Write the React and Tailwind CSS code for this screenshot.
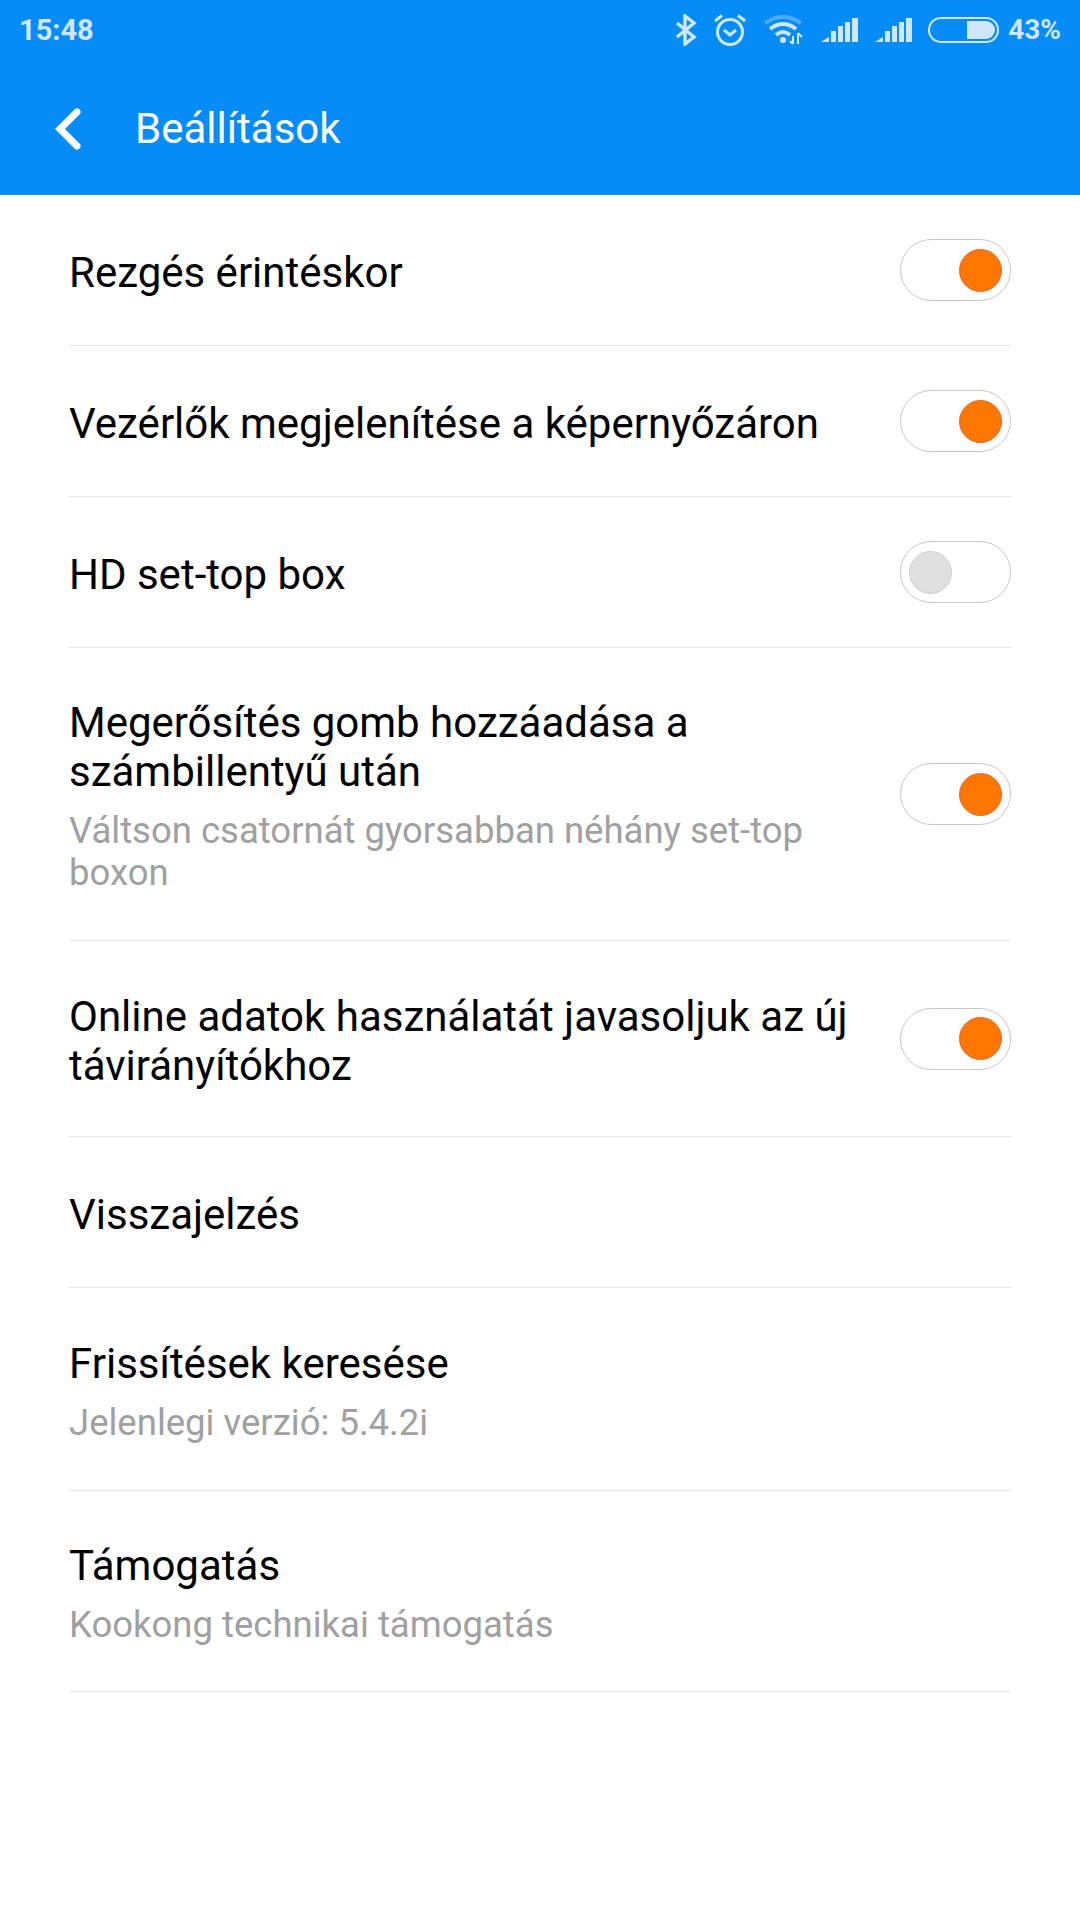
const FONT = "font-['Roboto',sans-serif]";

function Toggle({ on }) {
  return (
    <div className={`w-[111px] h-[62px] shrink-0 rounded-full border-[1.5px] border-[#c8c8c8] bg-white flex items-center ${on ? "justify-end pr-[8px]" : "justify-start pl-[8px]"}`}>
      <div className={`w-[43px] h-[43px] rounded-full border ${on ? "bg-[#ff7600] border-[#e8662a]" : "bg-[#e0e0e0] border-[#cfcfcf]"}`} />
    </div>
  );
}

function Row({ title, sub, toggle, h }) {
  return (
    <div className="border-b border-[#e6e6e6] flex items-center justify-between" style={{ height: h }}>
      <div className="flex-1 min-w-0 pr-[30px] pt-[4px]">
        <div className="text-[42px] leading-[49px] text-black">{title}</div>
        {sub && <div className="text-[36.5px] leading-[42px] text-[#a0a0a0] mt-[14px]">{sub}</div>}
      </div>
      {toggle !== undefined && <Toggle on={toggle} />}
    </div>
  );
}

function StatusIcons() {
  const c = "#cfe6fd";
  const Bars = () => (
    <svg width="38" height="26" viewBox="0 0 38 26">
      <path fill={c} d="M0 25 L8 20 V25 Z" />
      <rect x="10" y="14" width="5" height="11" fill={c} />
      <rect x="17" y="9" width="5" height="16" fill={c} />
      <rect x="24" y="5" width="5" height="20" fill={c} />
      <rect x="31" y="1" width="6" height="24" fill={c} />
    </svg>
  );
  return (
    <div className="flex items-center text-[#cfe6fd]">
      <svg width="22" height="32" viewBox="0 0 22 32" fill="none" stroke={c} strokeWidth="3.4" className="mr-[16px]">
        <path d="M2 9 L19 23 L10 30 V2 L19 9 L2 23" />
      </svg>
      <svg width="34" height="34" viewBox="0 0 34 34" fill="none" stroke={c} strokeWidth="3" className="mr-[17px]">
        <circle cx="17" cy="19" r="12.5" />
        <path d="M11 17 L17 22 L23 17" />
        <path d="M2 8 L9 2.5 M32 8 L25 2.5" />
      </svg>
      <svg width="40" height="30" viewBox="0 0 40 30" fill="none" className="mr-[17px]">
        <path d="M1 8 Q19 -4 37 8" stroke={c} strokeOpacity="0.35" strokeWidth="4" />
        <path d="M6 14 Q19 4 32 14" stroke={c} strokeWidth="4" />
        <path d="M12 20 Q19 14 26 20" stroke={c} strokeWidth="4" />
        <circle cx="19" cy="25" r="3" fill={c} />
        <path d="M29 21 V29 M34 18 V29 M26 26 L29 29 M38 22 L34 18" stroke={c} strokeWidth="2" />
      </svg>
      <div className="mr-[16px] flex"><Bars /></div>
      <div className="mr-[15px] flex"><Bars /></div>
      <div className="relative w-[71px] h-[26px] rounded-full border-2 border-[#cfe6fd] mr-[9px] overflow-hidden">
        <div className="absolute right-[2px] top-[2px] bottom-[2px] w-[28px] bg-[#cfe6fd] rounded-r-full" />
      </div>
      <span className="text-[28px] font-bold leading-none">43%</span>
    </div>
  );
}

export default function App() {
  return (
    <div className={`w-[1080px] h-[1920px] bg-white ${FONT}`}>
      <div className="h-[195px] bg-[#058cf7]">
        <div className="h-[60px] pl-[19px] pr-[19px] flex items-center justify-between">
          <span className="text-[29px] font-bold text-[#cfe6fd] leading-none">15:48</span>
          <StatusIcons />
        </div>
        <div className="flex items-center h-[70px] mt-[34px] pl-[55px]">
          <svg width="26" height="42" viewBox="0 0 26 42" fill="none" stroke="white" strokeWidth="7" strokeLinecap="round" strokeLinejoin="miter">
            <path d="M22 4 L5 21 L22 38" />
          </svg>
          <span className="text-[42px] leading-none text-white ml-[54px]">Beállítások</span>
        </div>
      </div>
      <div className="ml-[69px] mr-[69px]">
        <Row h={151} title="Rezgés érintéskor" toggle={true} />
        <Row h={151} title="Vezérlők megjelenítése a képernyőzáron" toggle={true} />
        <Row h={151} title="HD set-top box" toggle={false} />
        <Row h={293} title="Megerősítés gomb hozzáadása a számbillentyű után" sub="Váltson csatornát gyorsabban néhány set-top boxon" toggle={true} />
        <Row h={196} title="Online adatok használatát javasoljuk az új távirányítókhoz" toggle={true} />
        <Row h={151} title="Visszajelzés" />
        <Row h={203} title="Frissítések keresése" sub="Jelenlegi verzió: 5.4.2i" />
        <Row h={201} title="Támogatás" sub="Kookong technikai támogatás" />
      </div>
    </div>
  );
}
